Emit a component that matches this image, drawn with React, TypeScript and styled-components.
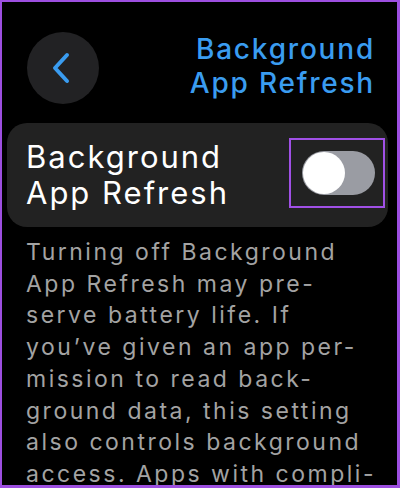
import React, { useState } from "react";
import styled, { createGlobalStyle } from "styled-components";

const GlobalStyle = createGlobalStyle`
  html, body {
    margin: 0;
    padding: 0;
    background: #000;
  }
  body {
    font-family: Inter, "Open Sans", "Liberation Sans", sans-serif;
    -webkit-font-smoothing: antialiased;
  }
`;

const Frame = styled.div`
  box-sizing: border-box;
  width: 400px;
  height: 488px;
  overflow: hidden;
  background: #000;
  border-style: solid;
  border-color: #9d4fe0;
  border-width: 2px 3px 3px 2px;
  padding: 30px 0 0 5px;
`;

const Header = styled.div`
  display: flex;
  justify-content: space-between;
  align-items: flex-start;
  padding: 0 22px 0 20px;
  height: 91px;
`;

const BackButton = styled.button`
  width: 72px;
  height: 72px;
  border-radius: 50%;
  border: none;
  background: #222224;
  display: flex;
  align-items: center;
  justify-content: center;
  padding: 0 4px 0 0;
  cursor: pointer;
`;

const Title = styled.h1`
  margin: 0;
  color: #3a9cf0;
  font-size: 28px;
  font-weight: 500;
  line-height: 34px;
  letter-spacing: 1.8px;
  text-align: right;
`;

const Card = styled.div`
  display: flex;
  align-items: center;
  justify-content: space-between;
  width: 381px;
  height: 104px;
  box-sizing: border-box;
  border-radius: 20px;
  background: #222222;
  padding: 0 3px 0 19px;
`;

const CardLabel = styled.div`
  color: #fff;
  font-size: 31px;
  line-height: 36px;
  font-weight: 400;
  letter-spacing: 2px;
`;

const Highlight = styled.div`
  width: 96px;
  height: 70px;
  box-sizing: border-box;
  border: 2px solid #a050e6;
  display: flex;
  align-items: center;
  justify-content: center;
  padding-left: 3px;
  margin-top: -4px;
`;

const Track = styled.div<{ $on: boolean }>`
  width: 73px;
  height: 44px;
  border-radius: 22px;
  background: ${(p) => (p.$on ? "#34c759" : "#9a9ca3")};
  position: relative;
  cursor: pointer;
`;

const Knob = styled.div<{ $on: boolean }>`
  position: absolute;
  top: 1px;
  left: ${(p) => (p.$on ? "30px" : "1px")};
  width: 42px;
  height: 42px;
  border-radius: 50%;
  background: #fff;
`;

const Footnote = styled.p`
  margin: 10px 0 0 19px;
  color: #a3a3a3;
  font-size: 23px;
  line-height: 31.7px;
  letter-spacing: 2.5px;
  white-space: pre-line;
`;

const footnote = `Turning off Background
App Refresh may pre-
serve battery life. If
you\u2019ve given an app per-
mission to read back-
ground data, this setting
also controls background
access. Apps with compli-`;

export default function App() {
  const [on, setOn] = useState(false);
  return (
    <>
      <GlobalStyle />
      <Frame>
        <Header>
          <BackButton aria-label="Back">
            <svg width="20" height="32" viewBox="0 0 20 32">
              <path
                d="M16 3 L4 16 L16 29"
                fill="none"
                stroke="#3a9cf0"
                strokeWidth="4"
                strokeLinecap="round"
                strokeLinejoin="round"
              />
            </svg>
          </BackButton>
          <Title>
            Background
            <br />
            App Refresh
          </Title>
        </Header>
        <Card>
          <CardLabel>
            Background
            <br />
            App Refresh
          </CardLabel>
          <Highlight>
            <Track $on={on} onClick={() => setOn(!on)}>
              <Knob $on={on} />
            </Track>
          </Highlight>
        </Card>
        <Footnote>{footnote}</Footnote>
      </Frame>
    </>
  );
}
